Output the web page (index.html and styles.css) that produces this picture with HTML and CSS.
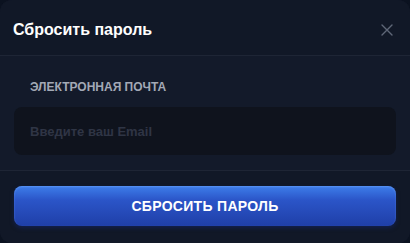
FILE: index.html
```html
<!DOCTYPE html>
<html lang="ru">
<head>
    <meta charset="UTF-8">
    <meta name="viewport" content="width=device-width, initial-scale=1.0">
    <title>Сбросить пароль</title>
    <link rel="stylesheet" href="styles.css">
</head>
<body>
    <div class="modal">
        <div class="modal-header">
            <h2 class="modal-title">Сбросить пароль</h2>
            <button class="close-btn" type="button" aria-label="Закрыть">
                <svg width="12" height="12" viewBox="0 0 12 12">
                    <path d="M1 1L11 11M11 1L1 11" stroke="#5f6778" stroke-width="1.4" stroke-linecap="round"/>
                </svg>
            </button>
        </div>
        <form class="modal-body">
            <label for="email" class="field-label">Электронная почта</label>
            <input type="email" id="email" class="field-input" placeholder="Введите ваш Email">
        </form>
        <div class="modal-footer">
            <button type="button" class="reset-btn">Сбросить пароль</button>
        </div>
    </div>
</body>
</html>
```

FILE: styles.css
```css
body {
    margin: 0;
    padding: 0;
    background-color: #0b1220;
    font-family: "Liberation Sans", Arial, sans-serif;
}

.modal {
    width: 410px;
    height: 243px;
    box-sizing: border-box;
    background-color: #131a2a;
    border-radius: 12px;
    overflow: hidden;
    display: flex;
    flex-direction: column;
}

.modal-header {
    height: 56px;
    display: flex;
    align-items: center;
    justify-content: space-between;
    padding: 4px 17px 0 13px;
    box-sizing: border-box;
    background-color: #111827;
    border-bottom: 1px solid #1e2535;
}

.modal-title {
    margin: 0;
    color: #ffffff;
    font-size: 16px;
    font-weight: bold;
}

.close-btn {
    background: none;
    border: none;
    padding: 0;
    width: 12px;
    height: 12px;
    display: flex;
    cursor: pointer;
}

.modal-body {
    margin: 0;
    padding: 24px 14px 15px;
    display: flex;
    flex-direction: column;
    border-bottom: 1px solid #1e2535;
}

.field-label {
    color: #a3a9b6;
    font-size: 12px;
    font-weight: bold;
    text-transform: uppercase;
    padding-left: 16px;
    margin-bottom: 13px;
}

.field-input {
    height: 48px;
    box-sizing: border-box;
    background-color: #0f131d;
    border: none;
    border-radius: 8px;
    padding: 0 16px;
    color: #ffffff;
    font-family: "Liberation Sans", Arial, sans-serif;
    font-size: 13px;
    font-weight: bold;
    outline: none;
}

.field-input::placeholder {
    color: #2f3545;
}

.modal-footer {
    flex: 1;
    padding: 15px 14px;
    background-color: #111827;
}

.reset-btn {
    width: 100%;
    height: 40px;
    border: none;
    border-radius: 8px;
    background: linear-gradient(to bottom, #3d7eea 0%, #2b55c8 35%, #1f3fa8 100%);
    box-shadow: inset 0 1px 2px rgba(120, 170, 255, 0.5), 0 2px 4px rgba(20, 40, 120, 0.5);
    color: #ffffff;
    font-family: "Liberation Sans", Arial, sans-serif;
    font-size: 14px;
    letter-spacing: 0.3px;
    font-weight: bold;
    text-transform: uppercase;
    cursor: pointer;
}
```
